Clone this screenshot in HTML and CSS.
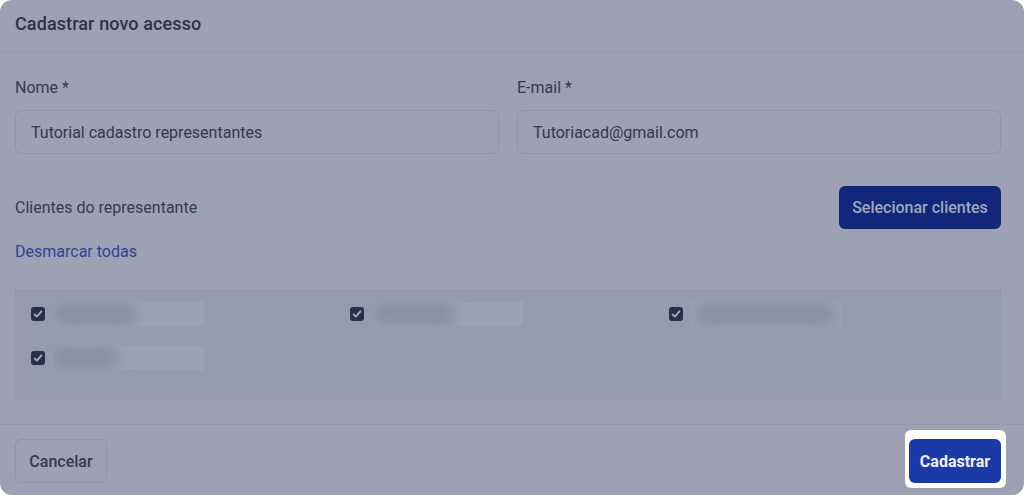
FILE: index.html
```html
<!DOCTYPE html>
<html lang="pt-BR">
<head>
<meta charset="utf-8">
<title>Cadastrar novo acesso</title>
<link rel="stylesheet" href="styles.css">
</head>
<body>
<div class="modal">
  <header class="modal-header">
    <h1 class="modal-title">Cadastrar novo acesso</h1>
  </header>
  <main class="modal-body">
    <div class="fields">
      <div class="field">
        <label class="label">Nome *</label>
        <div class="input">Tutorial cadastro representantes</div>
      </div>
      <div class="field">
        <label class="label">E-mail *</label>
        <div class="input">Tutoriacad@gmail.com</div>
      </div>
    </div>
    <div class="clients-row">
      <span class="clients-label">Clientes do representante</span>
      <button class="btn-select">Selecionar clientes</button>
    </div>
    <a class="link">Desmarcar todas</a>
    <div class="client-box">
      <div class="client"><span class="check"><svg viewBox="0 0 14 14" width="14" height="14"><path d="M3.6 7.4 L5.9 9.6 L10.4 4.3" fill="none" stroke="#a4a8ba" stroke-width="1.9" stroke-linecap="round" stroke-linejoin="round"/></svg></span><span class="blur-name"><span class="blob"></span></span></div>
      <div class="client"><span class="check"><svg viewBox="0 0 14 14" width="14" height="14"><path d="M3.6 7.4 L5.9 9.6 L10.4 4.3" fill="none" stroke="#a4a8ba" stroke-width="1.9" stroke-linecap="round" stroke-linejoin="round"/></svg></span><span class="blur-name"><span class="blob"></span></span></div>
      <div class="client"><span class="check"><svg viewBox="0 0 14 14" width="14" height="14"><path d="M3.6 7.4 L5.9 9.6 L10.4 4.3" fill="none" stroke="#a4a8ba" stroke-width="1.9" stroke-linecap="round" stroke-linejoin="round"/></svg></span><span class="blur-name"><span class="blob long"></span></span></div>
      <div class="client"><span class="check"><svg viewBox="0 0 14 14" width="14" height="14"><path d="M3.6 7.4 L5.9 9.6 L10.4 4.3" fill="none" stroke="#a4a8ba" stroke-width="1.9" stroke-linecap="round" stroke-linejoin="round"/></svg></span><span class="blur-name"><span class="blob short"></span></span></div>
    </div>
  </main>
  <footer class="modal-footer">
    <button class="btn-cancel">Cancelar</button>
    <div class="spotlight">
      <button class="btn-submit">Cadastrar</button>
    </div>
  </footer>
</div>
</body>
</html>
```

FILE: styles.css
```css
* { box-sizing: border-box; }

html, body {
  margin: 0;
  padding: 0;
  background: #ffffff;
}

body {
  font-family: Roboto, "Liberation Sans", sans-serif;
  width: 1024px;
  height: 495px;
  overflow: hidden;
}

.modal {
  width: 1024px;
  height: 495px;
  background: #9ea1b3;
  border-radius: 12px;
  display: flex;
  flex-direction: column;
}

.modal-header {
  height: 53px;
  padding: 0 15px;
  display: flex;
  align-items: center;
  border-bottom: 1px solid #9598ab;
}

.modal-title {
  margin: 0 0 5px;
  font-size: 18px;
  font-weight: 500;
  color: #2d3246;
  letter-spacing: 0.1px;
}

.modal-body {
  padding: 25px 23px 24px 15px;
  display: flex;
  flex-direction: column;
}

.fields {
  display: flex;
  gap: 18px;
}

.field {
  flex: 1;
  display: flex;
  flex-direction: column;
}

.label {
  font-size: 16px;
  line-height: 20px;
  color: #363a4e;
  margin-bottom: 12px;
}

.input {
  height: 44px;
  border: 1px solid #9295a8;
  border-radius: 6px;
  padding: 0 15px;
  display: flex;
  align-items: center;
  font-size: 16px;
  color: #33384c;
}

.clients-row {
  margin-top: 32px;
  display: flex;
  justify-content: space-between;
  align-items: center;
}

.clients-label {
  font-size: 16px;
  color: #363a4e;
}

.btn-select {
  height: 43px;
  width: 162px;
  border: none;
  border-radius: 6px;
  background: #10277a;
  color: #a3a7bd;
  font-family: Roboto, "Liberation Sans", sans-serif;
  font-size: 16px;
  font-weight: 500;
  padding: 0;
}

.link {
  margin-top: 13px;
  font-size: 16px;
  line-height: 20px;
  color: #2d4493;
  align-self: flex-start;
}

.client-box {
  margin-top: 27px;
  height: 111px;
  background: #959aae;
  padding: 13px 16px 0 16px;
  display: grid;
  grid-template-columns: 319px 319px 1fr;
  grid-auto-rows: 24px;
  row-gap: 20px;
}

.client {
  display: flex;
  align-items: center;
  gap: 8px;
}

.check {
  width: 14px;
  height: 14px;
  border-radius: 3px;
  background: #2b2e44;
  display: flex;
}

.blur-name {
  width: 151px;
  height: 24px;
  background: #9ca0b3;
  overflow: hidden;
  display: flex;
  align-items: center;
}

.blob {
  display: block;
  width: 84px;
  height: 24px;
  margin-left: 0;
  background: #8b8fa3;
  border-radius: 12px;
  filter: blur(7px);
}

.blob.long { width: 140px; margin-left: 4px; }
.blob.short { width: 70px; margin-left: -4px; }

.modal-footer {
  flex: 1;
  border-top: 1px solid #9598ab;
  padding: 5px 18px 0 15px;
  display: flex;
  justify-content: space-between;
  align-items: flex-start;
}

.btn-cancel {
  margin-top: 9px;
  height: 44px;
  width: 92px;
  border: 1px solid #9295a8;
  border-radius: 6px;
  background: transparent;
  color: #34394d;
  font-family: Roboto, "Liberation Sans", sans-serif;
  font-size: 16px;
  font-weight: 500;
  padding: 0;
}

.spotlight {
  background: #ffffff;
  border-radius: 6px;
  padding: 9px 5px 5px 4px;
  display: flex;
}

.btn-submit {
  height: 44px;
  width: 92px;
  border: none;
  border-radius: 6px;
  background: #1b3aa8;
  color: #eef0f8;
  font-family: Roboto, "Liberation Sans", sans-serif;
  font-size: 16px;
  font-weight: 700;
  padding: 0;
}
```
